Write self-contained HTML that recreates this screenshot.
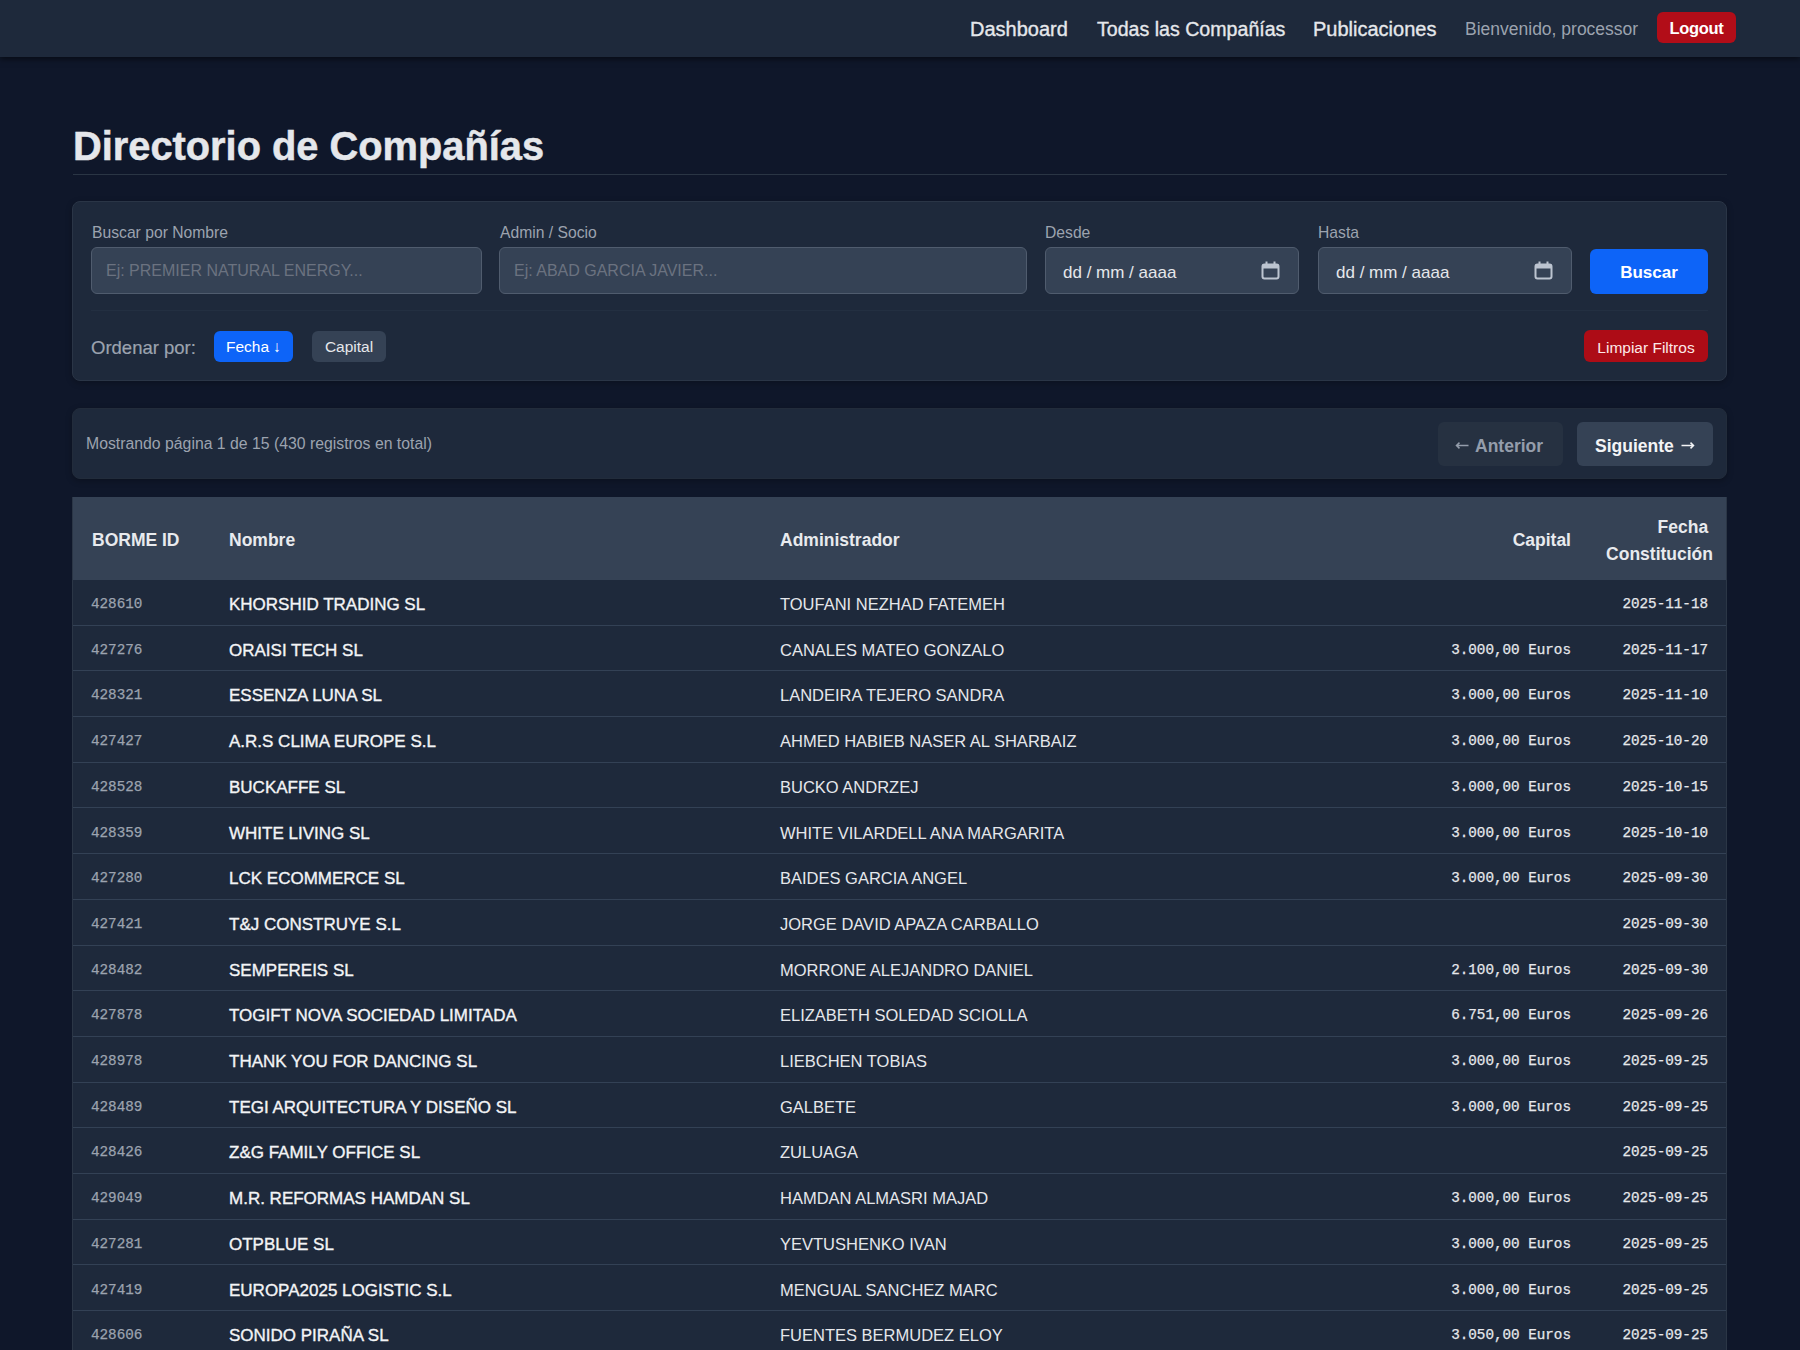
<!DOCTYPE html>
<html lang="es">
<head>
<meta charset="utf-8">
<title>Directorio de Compañías</title>
<style>
*{box-sizing:border-box;margin:0;padding:0}
html,body{width:1800px;height:1350px;overflow:hidden}
body{background:#0f172a;font-family:"Liberation Sans",sans-serif;color:#e5e7eb;position:relative}
.abs{position:absolute;white-space:nowrap}
nav{position:absolute;left:0;top:0;width:1800px;height:57px;background:#1e293b;box-shadow:0 2px 6px rgba(0,0,0,.55)}
.nl{position:absolute;top:17px;font-size:20px;line-height:24px;color:#e5e7eb;-webkit-text-stroke:0.35px #e5e7eb}
.welcome{position:absolute;top:18px;font-size:17.5px;line-height:22px;color:#9ca3af}
.logout{position:absolute;left:1657px;top:12px;width:79px;height:31px;border-radius:6px;background:#b20d18;color:#fff;font-weight:700;font-size:16.5px;line-height:32px;text-align:center;letter-spacing:-0.3px}
h1{position:absolute;left:73px;top:122px;font-size:39.8px;line-height:48px;font-weight:700;color:#e5e7eb;white-space:nowrap;-webkit-text-stroke:0.5px #e5e7eb}
.hr{position:absolute;left:73px;top:174px;width:1654px;height:1px;background:#2a3544}
.card{position:absolute;left:72px;width:1655px;background:#1e293b;border:1px solid #2a3546;border-radius:8px;box-shadow:0 2px 6px rgba(0,0,0,.25)}
.lbl{position:absolute;top:224px;font-size:15.7px;line-height:18px;color:#9ca3af}
.inp{position:absolute;top:247px;height:47px;background:#354255;border:1px solid #505c6e;border-radius:6px}
.ph{position:absolute;left:14px;top:13px;font-size:16px;line-height:20px;color:#6b7280;white-space:nowrap}
.dt{position:absolute;left:17px;top:15px;font-size:17px;line-height:20px;color:#e5e7eb;white-space:nowrap}
.cal{position:absolute;top:13px;width:19px;height:19px}
.btn{position:absolute;border-radius:6px;text-align:center;white-space:nowrap}
.tbl{position:absolute;left:72px;top:497px;width:1655px;height:853px;background:#1e293b;overflow:hidden;border-left:1px solid #2b3646;border-right:1px solid #2b3646}
.thead{position:absolute;left:0;top:0;width:100%;height:83px;background:#354255}
.th{position:absolute;font-weight:700;font-size:17.5px;line-height:22px;color:#e8eaee;white-space:nowrap}
.thr{text-align:right}
.tr{position:absolute;left:0;width:100%;height:45.7px;border-bottom:1px solid #334155}
.tr span{position:absolute;top:2px;line-height:45.7px;white-space:nowrap}
.id{left:18px;font-family:"Liberation Mono",monospace;font-size:14.28px;color:#9ca3af;-webkit-text-stroke:0.25px #9ca3af}
.nm{left:156px;font-size:17px;color:#f3f4f6;-webkit-text-stroke:0.35px #f3f4f6}
.ad{left:707px;font-size:16.5px;color:#e5e7eb}
.cap{right:155px;font-family:"Liberation Mono",monospace;font-size:14.28px;color:#e5e7eb;-webkit-text-stroke:0.25px #e5e7eb}
.fd{right:18px;font-family:"Liberation Mono",monospace;font-size:14.28px;color:#e5e7eb;-webkit-text-stroke:0.25px #e5e7eb}
</style>
</head>
<body>
<nav>
  <div class="nl" style="left:970px">Dashboard</div>
  <div class="nl" style="left:1097px;font-size:19.6px">Todas las Compañías</div>
  <div class="nl" style="left:1313px">Publicaciones</div>
  <div class="welcome" style="left:1465px">Bienvenido, processor</div>
  <div class="logout">Logout</div>
</nav>

<h1>Directorio de Compañías</h1>
<div class="hr"></div>

<div class="card" style="top:201px;height:180px"></div>
<div class="lbl" style="left:92px">Buscar por Nombre</div>
<div class="lbl" style="left:500px">Admin / Socio</div>
<div class="lbl" style="left:1045px">Desde</div>
<div class="lbl" style="left:1318px">Hasta</div>

<div class="inp" style="left:91px;width:391px"><div class="ph">Ej: PREMIER NATURAL ENERGY...</div></div>
<div class="inp" style="left:499px;width:528px"><div class="ph">Ej: ABAD GARCIA JAVIER...</div></div>
<div class="inp" style="left:1045px;width:254px"><div class="dt">dd / mm / aaaa</div>
  <svg class="cal" style="left:215px" viewBox="0 0 19 19"><rect x="1.5" y="3.5" width="16" height="14" rx="2" fill="none" stroke="#bcc4d0" stroke-width="2"/><rect x="1.5" y="3.5" width="16" height="4" fill="#bcc4d0"/><rect x="4.5" y="0.5" width="2" height="4" fill="#bcc4d0"/><rect x="12.5" y="0.5" width="2" height="4" fill="#bcc4d0"/></svg></div>
<div class="inp" style="left:1318px;width:254px"><div class="dt">dd / mm / aaaa</div>
  <svg class="cal" style="left:215px" viewBox="0 0 19 19"><rect x="1.5" y="3.5" width="16" height="14" rx="2" fill="none" stroke="#bcc4d0" stroke-width="2"/><rect x="1.5" y="3.5" width="16" height="4" fill="#bcc4d0"/><rect x="4.5" y="0.5" width="2" height="4" fill="#bcc4d0"/><rect x="12.5" y="0.5" width="2" height="4" fill="#bcc4d0"/></svg></div>
<div class="btn" style="left:1590px;top:249px;width:118px;height:45px;background:#0d64f8;color:#fff;font-weight:700;font-size:17px;line-height:47px">Buscar</div>

<div class="abs" style="left:91px;top:310px;width:1617px;height:1px;background:#232f41"></div>
<div class="abs" style="left:91px;top:337px;font-size:18.5px;line-height:22px;color:#9ca3af;-webkit-text-stroke:0.2px #9ca3af">Ordenar por:</div>
<div class="btn" style="left:214px;top:331px;width:79px;height:31px;background:#0d64f8;color:#fff;font-size:15.5px;line-height:31px">Fecha ↓</div>
<div class="btn" style="left:312px;top:331px;width:74px;height:31px;background:#354255;color:#e5e7eb;font-size:15.5px;line-height:31px">Capital</div>
<div class="btn" style="left:1584px;top:330px;width:124px;height:32px;background:#ad0c16;color:#fde8e8;font-size:15.5px;line-height:36px">Limpiar Filtros</div>

<div class="card" style="top:408px;height:71px;border-color:#222c3b;border-radius:8px"></div>
<div class="abs" style="left:86px;top:434px;font-size:15.8px;line-height:20px;color:#9ca3af">Mostrando página 1 de 15 (430 registros en total)</div>
<div class="btn" style="left:1438px;top:422px;width:125px;height:44px;background:#263141"></div>
<svg class="abs" style="left:1455px;top:440px" width="14" height="11" viewBox="0 0 14 11"><path d="M13.5 5.5H1.5M4.5 2.6L1.5 5.5L4.5 8.4" fill="none" stroke="#949dab" stroke-width="1.5"/></svg>
<div class="abs" style="left:1475px;top:435px;font-weight:700;font-size:17.5px;line-height:22px;color:#949dab">Anterior</div>
<div class="btn" style="left:1577px;top:422px;width:136px;height:44px;background:#354255"></div>
<div class="abs" style="left:1595px;top:435px;font-weight:700;font-size:17.5px;line-height:22px;color:#f3f4f6">Siguiente</div>
<svg class="abs" style="left:1681px;top:440px" width="14" height="11" viewBox="0 0 14 11"><path d="M0.5 5.5H12.5M9.5 2.6L12.5 5.5L9.5 8.4" fill="none" stroke="#f3f4f6" stroke-width="1.5"/></svg>

<div id="table"><div class="tbl">
<div class="thead"><div class="th" style="left:19px;top:32px">BORME ID</div><div class="th" style="left:156px;top:32px">Nombre</div><div class="th" style="left:707px;top:32px">Administrador</div><div class="th thr" style="right:155px;top:32px">Capital</div><div class="th thr" style="right:13px;top:17px;line-height:27px">Fecha&nbsp;<br>Constitución</div></div>
<div class="tr" style="top:83.00px"><span class="id">428610</span><span class="nm">KHORSHID TRADING SL</span><span class="ad">TOUFANI NEZHAD FATEMEH</span><span class="cap"></span><span class="fd">2025-11-18</span></div>
<div class="tr" style="top:128.70px"><span class="id">427276</span><span class="nm">ORAISI TECH SL</span><span class="ad">CANALES MATEO GONZALO</span><span class="cap">3.000,00 Euros</span><span class="fd">2025-11-17</span></div>
<div class="tr" style="top:174.40px"><span class="id">428321</span><span class="nm">ESSENZA LUNA SL</span><span class="ad">LANDEIRA TEJERO SANDRA</span><span class="cap">3.000,00 Euros</span><span class="fd">2025-11-10</span></div>
<div class="tr" style="top:220.10px"><span class="id">427427</span><span class="nm">A.R.S CLIMA EUROPE S.L</span><span class="ad">AHMED HABIEB NASER AL SHARBAIZ</span><span class="cap">3.000,00 Euros</span><span class="fd">2025-10-20</span></div>
<div class="tr" style="top:265.80px"><span class="id">428528</span><span class="nm">BUCKAFFE SL</span><span class="ad">BUCKO ANDRZEJ</span><span class="cap">3.000,00 Euros</span><span class="fd">2025-10-15</span></div>
<div class="tr" style="top:311.50px"><span class="id">428359</span><span class="nm">WHITE LIVING SL</span><span class="ad">WHITE VILARDELL ANA MARGARITA</span><span class="cap">3.000,00 Euros</span><span class="fd">2025-10-10</span></div>
<div class="tr" style="top:357.20px"><span class="id">427280</span><span class="nm">LCK ECOMMERCE SL</span><span class="ad">BAIDES GARCIA ANGEL</span><span class="cap">3.000,00 Euros</span><span class="fd">2025-09-30</span></div>
<div class="tr" style="top:402.90px"><span class="id">427421</span><span class="nm">T&amp;J CONSTRUYE S.L</span><span class="ad">JORGE DAVID APAZA CARBALLO</span><span class="cap"></span><span class="fd">2025-09-30</span></div>
<div class="tr" style="top:448.60px"><span class="id">428482</span><span class="nm">SEMPEREIS SL</span><span class="ad">MORRONE ALEJANDRO DANIEL</span><span class="cap">2.100,00 Euros</span><span class="fd">2025-09-30</span></div>
<div class="tr" style="top:494.30px"><span class="id">427878</span><span class="nm">TOGIFT NOVA SOCIEDAD LIMITADA</span><span class="ad">ELIZABETH SOLEDAD SCIOLLA</span><span class="cap">6.751,00 Euros</span><span class="fd">2025-09-26</span></div>
<div class="tr" style="top:540.00px"><span class="id">428978</span><span class="nm">THANK YOU FOR DANCING SL</span><span class="ad">LIEBCHEN TOBIAS</span><span class="cap">3.000,00 Euros</span><span class="fd">2025-09-25</span></div>
<div class="tr" style="top:585.70px"><span class="id">428489</span><span class="nm">TEGI ARQUITECTURA Y DISEÑO SL</span><span class="ad">GALBETE</span><span class="cap">3.000,00 Euros</span><span class="fd">2025-09-25</span></div>
<div class="tr" style="top:631.40px"><span class="id">428426</span><span class="nm">Z&amp;G FAMILY OFFICE SL</span><span class="ad">ZULUAGA</span><span class="cap"></span><span class="fd">2025-09-25</span></div>
<div class="tr" style="top:677.10px"><span class="id">429049</span><span class="nm">M.R. REFORMAS HAMDAN SL</span><span class="ad">HAMDAN ALMASRI MAJAD</span><span class="cap">3.000,00 Euros</span><span class="fd">2025-09-25</span></div>
<div class="tr" style="top:722.80px"><span class="id">427281</span><span class="nm">OTPBLUE SL</span><span class="ad">YEVTUSHENKO IVAN</span><span class="cap">3.000,00 Euros</span><span class="fd">2025-09-25</span></div>
<div class="tr" style="top:768.50px"><span class="id">427419</span><span class="nm">EUROPA2025 LOGISTIC S.L</span><span class="ad">MENGUAL SANCHEZ MARC</span><span class="cap">3.000,00 Euros</span><span class="fd">2025-09-25</span></div>
<div class="tr" style="top:814.20px"><span class="id">428606</span><span class="nm">SONIDO PIRAÑA SL</span><span class="ad">FUENTES BERMUDEZ ELOY</span><span class="cap">3.050,00 Euros</span><span class="fd">2025-09-25</span></div>
</div></div>
</body>
</html>
